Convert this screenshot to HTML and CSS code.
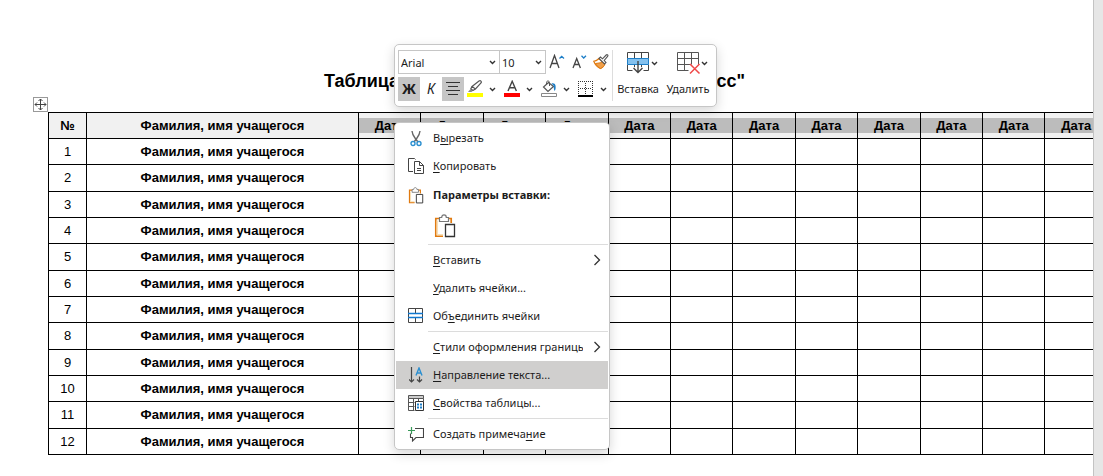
FILE: index.html
```html
<!DOCTYPE html>
<html lang="ru">
<head>
<meta charset="utf-8">
<title>Таблица</title>
<link rel="stylesheet" href="styles.css">
</head>
<body>
<main class="sheet">
  <h1 class="title"><span>Таблица</span><span>класс"</span></h1>
  <table class="grid" id="grid">
    <colgroup><col class="col-num"><col class="col-name"><col span="12"></colgroup>
    <thead><tr id="head"><th>№</th><th>Фамилия, имя учащегося</th></tr></thead>
    <tbody id="rows"></tbody>
  </table>
  <button class="move-handle" aria-label="Переместить таблицу">
    <svg width="13" height="13" viewBox="0 0 13 13" fill="none" stroke="#444"><path d="M6.500 1v11M1 6.500h11M4.500 3l2-2 2 2M4.500 10l2 2 2-2M3 4.500l-2 2 2 2M10 4.500l2 2-2 2"/></svg>
  </button>
</main>

<svg class="defs" width="0" height="0" aria-hidden="true">
  <symbol id="chev" viewBox="0 0 7 5"><path d="M1 1l2.500 2.500L6 1" fill="none" stroke="#333" stroke-width="1.400"/></symbol>
  <symbol id="arrow" viewBox="0 0 8 12"><path d="M1.500 1l5 5-5 5" fill="none" stroke="#333" stroke-width="1.300"/></symbol>
  <symbol id="paste" viewBox="0 0 22 24"><path d="M6 4.500H1.800v17.700H9M14 4.500h3.200V9" fill="none" stroke="#e07a10" stroke-width="1.700"/><path d="M3.300 6.500v14.200H9" fill="none" stroke="#f8dfb5" stroke-width="1.500"/><path d="M5.500 7.500v-4h2.200c0-3.500 4.600-3.500 4.600 0h2.200v4z" fill="#fff" stroke="#777" stroke-width="1.200"/><path d="M11.500 10.500h9v12h-9z" fill="#fff" stroke="#333" stroke-width="1.300"/></symbol>
</svg>

<div class="toolbar" role="toolbar" aria-label="Форматирование">
  <div class="tools">
    <div class="tool-row">
      <div class="combo combo-font"><select aria-label="Шрифт"><option>Arial</option></select><svg width="7" height="5"><use href="#chev"/></svg></div>
      <div class="combo combo-size"><select aria-label="Размер шрифта"><option>10</option></select><svg width="7" height="5"><use href="#chev"/></svg></div>
      <button class="tool" aria-label="Увеличить размер"><svg width="16" height="16" viewBox="0 0 16 16" fill="none"><path d="M1 14L5.500 1.500 10 14M2.800 9.500h5.600" stroke="#444" stroke-width="1.300"/><path d="M10.500 4.500l2.200-2.200L15 4.500" stroke="#1e7fc8" stroke-width="1.300"/></svg></button>
      <button class="tool" aria-label="Уменьшить размер"><svg width="16" height="16" viewBox="0 0 16 16" fill="none"><path d="M2 14L5.700 4.500 9.400 14M3.500 10.500h4.500" stroke="#444" stroke-width="1.300"/><path d="M10.500 1.800l2.200 2.200L15 1.800" stroke="#1e7fc8" stroke-width="1.300"/></svg></button>
      <button class="tool" aria-label="Формат по образцу"><svg width="16" height="16" viewBox="0 0 16 16"><path d="M6 4.500C4.500 6 2.500 7 .8 7.300 2 10.500 4 13 7.500 14.500c2-1 3.500-2.500 4-4.500z" fill="#fff" stroke="#e07a10" stroke-width="1.200"/><path d="M2.500 9.500l7-1L12 10c-.8 2-2.300 3.700-4.500 4.500C5.500 13.500 3.500 11.500 2.500 9.500z" fill="#f0a04b" stroke="#e07a10"/><path d="M6 4.500L7.500 3l2 1.800L13.200 1c1-1 2.300.3 1.400 1.400L11.200 6.500l1.800 2-1.500 1.500z" fill="#fff" stroke="#555" stroke-width="1.100"/></svg></button>
    </div>
    <div class="tool-row">
      <button class="tool on bold" aria-label="Полужирный">Ж</button>
      <button class="tool italic" aria-label="Курсив">К</button>
      <button class="tool on" aria-label="По центру"><svg width="14" height="14" viewBox="0 0 14 14" stroke="#333"><path d="M0 .5h14M2 4.500h10M0 8.500h14M2 12.500h10"/></svg></button>
      <button class="tool" aria-label="Цвет выделения"><svg width="16" height="18" viewBox="0 0 16 18"><path d="M0 13h16v4H0z" fill="#ff0"/><path d="M5 6.500L12 1c1.500-1 3 .5 2 2L8.500 9zM5 6.500L3.800 8.800l2 1.700L8.500 9" fill="#fff" stroke="#555" stroke-width="1.200"/><path d="M3.500 9L1 12h3.500l1.200-1.300z" fill="#888"/></svg></button>
      <button class="drop" aria-label="Варианты выделения"><svg width="7" height="5"><use href="#chev"/></svg></button>
      <button class="tool" aria-label="Цвет текста"><svg width="16" height="18" viewBox="0 0 16 18"><path d="M0 13h16v4H0z" fill="red"/><path d="M4 11L8.200 1.300 12.400 11M5.500 7.800h5.400" fill="none" stroke="#444" stroke-width="1.400"/></svg></button>
      <button class="drop" aria-label="Варианты цвета"><svg width="7" height="5"><use href="#chev"/></svg></button>
      <button class="tool" aria-label="Заливка"><svg width="16" height="18" viewBox="0 0 16 18"><path d="M.5 13.500h15v3H.5z" fill="#fff" stroke="#888"/><path d="M7.500 2.500L2.500 7l4.500 4.500L12.500 6.500z" fill="#fff" stroke="#555" stroke-width="1.200"/><path d="M5.500 4.500V2.500c0-2 3-2 3 0V6" fill="none" stroke="#555"/><path d="M10.500 3.500c2-.5 3.500 0 4 2 .3 2 .3 4-.8 5.500C12.500 9.500 13 6.500 12.500 5.500z" fill="#1e7fc8"/></svg></button>
      <button class="drop" aria-label="Варианты заливки"><svg width="7" height="5"><use href="#chev"/></svg></button>
      <button class="tool" aria-label="Границы"><svg width="16" height="16" viewBox="0 0 16 16" stroke="#333"><path d="M0 .5h15M.5 0v14M14.500 0v14M7.500 2v12M2 7.500h12" stroke-dasharray="1 1"/><path d="M0 15h15" stroke="#000" stroke-width="2"/></svg></button>
      <button class="drop" aria-label="Варианты границ"><svg width="7" height="5"><use href="#chev"/></svg></button>
    </div>
  </div>
  <button class="big"><span class="big-icon">
    <svg width="22" height="22" viewBox="0 0 22 22" fill="none" stroke="#444"><path d="M.5.500h21v6H.5zM7.500.500v6M14.500.500v6M.5 12.500v6h5M21.500 12.500v6h-5M7.500 12.500v3M14.500 12.500v3"/><path d="M.5 6.500h21v6H.5z" fill="#84c1ee" stroke="#1e7fc8"/><path d="M11 13v8M6.500 16L11 20.500l4.500-4.500" stroke="#fff" stroke-width="3"/><path d="M11 9v12M6.500 16L11 20.500l4.500-4.500" stroke-width="1.400"/></svg>
    <svg class="big-chev" width="7" height="5"><use href="#chev"/></svg></span>Вставка</button>
  <button class="big"><span class="big-icon">
    <svg width="22" height="22" viewBox="0 0 22 22" fill="none" stroke="#555"><path d="M.5.500h21v12M.5.500v18h11M7.500.500v18M14.500.500v12M.5 6.500h21M.5 12.500h13"/><path d="M13 12l9.500 9.500M22.500 12L13 21.500" stroke="#f04848" stroke-width="1.500"/></svg>
    <svg class="big-chev" width="7" height="5"><use href="#chev"/></svg></span>Удалить</button>
</div>

<div class="menu" role="menu">
  <button class="item" role="menuitem"><svg width="12" height="17" viewBox="0 0 12 17" fill="none"><path d="M2 1c.3 3 1 4.500 3 7l3 4M10 1c-.3 3-1 4.500-3 7l-3 4" stroke="#666" stroke-width="1.400"/><circle cx="3" cy="13.500" r="2" stroke="#2b8fd0" stroke-width="1.400"/><circle cx="9" cy="13.500" r="2" stroke="#2b8fd0" stroke-width="1.400"/></svg><span class="label">В<u>ы</u>резать</span></button>
  <button class="item" role="menuitem"><svg width="16" height="16" viewBox="0 0 16 16" fill="#fff" stroke="#444"><path d="M5 13.500H.5V.500h6l1 1"/><path d="M6.500 3.500h5l4 4v8h-9z"/><path d="M11.500 3.500v4h4M9 10.500h4M9 12.500h4" fill="none"/></svg><span class="label"><u>К</u>опировать</span></button>
  <div class="item heading"><svg width="16" height="17"><use href="#paste"/></svg><span class="label">Параметры вставки:</span></div>
  <div class="paste-row"><button class="paste" aria-label="Сохранить исходное форматирование"><svg width="22" height="24"><use href="#paste"/></svg></button></div>
  <hr>
  <button class="item" role="menuitem"><i></i><span class="label"><u>В</u>ставить</span><svg width="8" height="12"><use href="#arrow"/></svg></button>
  <button class="item" role="menuitem"><i></i><span class="label"><u>У</u>далить ячейки...</span></button>
  <button class="item" role="menuitem"><svg width="16" height="16" viewBox="0 0 16 16" fill="none"><path d="M.5.500h14v14H.5zM7.500.500v5M7.500 10v5" stroke="#444"/><path d="M0 5.500h15M0 9.500h15" stroke="#0f78d0" stroke-width="1.400"/></svg><span class="label">Об<u>ъ</u>единить ячейки</span></button>
  <hr>
  <button class="item" role="menuitem"><i></i><span class="label"><u>С</u>тили оформления границы</span><svg width="8" height="12"><use href="#arrow"/></svg></button>
  <button class="item active" role="menuitem"><svg width="14" height="17" viewBox="0 0 14 17" fill="none"><path d="M2.500 0v15M0 12.500L2.500 15 5 12.500M10.500 9.500V15M8 12.500l2.500 2.500 2.500-2.500" stroke="#444" stroke-width="1.200"/><path d="M7 8.500L10 1l3 7.500M8 6h4" stroke="#2b8fd0" stroke-width="1.400"/></svg><span class="label"><u>Н</u>аправление текста...</span></button>
  <button class="item" role="menuitem"><svg width="16" height="16" viewBox="0 0 16 16" fill="none" stroke="#555"><path d="M.5.500h15v3H.5z" fill="#ccc"/><path d="M.5 3.500v12h6M.5 7.500h6M.5 11.500h6M5.500 3.500v12M10.500 3.500v3M15.500 3.500v3"/><path d="M7.500 6.500h8v9h-8z" fill="#fff" stroke="#333"/><path d="M9 9.500h2M12 9.500h2M9 12.500h2M12 12.500h2" stroke="#1e7fc8" stroke-width="2"/></svg><span class="label"><u>С</u>войства таблицы...</span></button>
  <hr>
  <button class="item" role="menuitem"><svg width="16" height="15" viewBox="0 0 16 15" fill="none"><path d="M7 1.500h8.500v9H8L4.500 14v-3.500h-2v-4" stroke="#444" stroke-width="1.100"/><path d="M3.500 0v7M0 3.500h7" stroke="#3a9a5a" stroke-width="1.200"/></svg><span class="label">Создать примеча<u>н</u>ие</span></button>
</div>
<script src="grid.js"></script>
</body>
</html>
```
FILE: styles.css
```css
* { box-sizing: border-box; }
body {
  margin: 0;
  min-height: 100vh;
  display: flex;
  background: #e6e6e6;
  color: #000;
  font-family: "Liberation Sans", Arial, sans-serif;
}
.sheet {
  position: relative;
  flex: 1;
  min-width: 0;
  margin-right: 9px;
  padding: 68px 0 20px 48px;
  background: #fff;
  border-right: 1px solid #c3c3c3;
  overflow: hidden;
}
.title {
  display: flex;
  justify-content: space-between;
  width: 421px;
  margin: 0 0 18px 276px;
  font-size: 18px;
  line-height: 26px;
}
.grid {
  width: calc(100% + 15px);
  height: 343px;
  table-layout: fixed;
  border-collapse: collapse;
  font-size: 13px;
  line-height: 15px;
  text-align: center;
}
.grid th, .grid td { height: 26px; padding: 0; border: 1px solid #000; }
.grid thead th { background: #f1f1f1; }
.col-num { width: 38px; }
.col-name { width: 272px; }
.picked { display: block; background: #bcbcbc; }
.move-handle {
  position: absolute;
  left: 33px;
  top: 97px;
  display: grid;
  place-items: center;
  width: 15px;
  height: 15px;
  padding: 0;
  border: 1px solid #999;
  background: #fff;
}
.defs { position: absolute; }
button, select { font: inherit; color: inherit; }
.toolbar, .menu {
  position: absolute;
  left: 394px;
  background: #fff;
  border: 1px solid #c6c6c6;
  border-radius: 5px;
  box-shadow: 0 4px 12px rgba(0, 0, 0, .16);
  color: #1c1c1c;
  font-family: "Noto Sans", "Open Sans", sans-serif;
  font-size: 11px;
}
.toolbar {
  top: 44px;
  display: flex;
  padding: 5px 3px;
}
.tools { display: grid; gap: 3px; }
.tool-row { display: flex; height: 24px; }
.combo {
  display: grid;
  grid-template-columns: 1fr 14px;
  align-items: center;
  border: 1px solid #c6c6c6;
}
.combo-font { width: 102px; }
.combo-size { width: 46px; border-left: 0; }
.combo select {
  grid-area: 1 / 1 / 2 / 3;
  height: 22px;
  padding: 0 2px;
  border: 0;
  background: none;
  appearance: none;
}
.combo svg { grid-area: 1 / 2; pointer-events: none; margin-left: 4px; }
.tool, .drop {
  display: grid;
  place-items: center;
  width: 22px;
  padding: 0;
  border: 0;
  background: none;
  line-height: 18px;
}
.drop { width: 13px; margin-right: 2px; }
.on { background: #c6c6c6; }
.bold { font-size: 14px; font-weight: 700; }
.italic { font-size: 14px; font-style: italic; }
.big {
  display: grid;
  align-content: space-between;
  justify-items: center;
  width: 50px;
  padding: 2px 0 3px;
  border: 0;
  background: none;
  line-height: 18px;
}
.tools + .big { width: 51px; border-left: 1px solid #ddd; }
.big-icon {
  display: grid;
  grid-template-columns: 1fr 22px 1fr;
  align-items: center;
  width: 100%;
}
.big-icon svg { grid-row: 1; grid-column: 2; overflow: visible; }
.big-icon .big-chev { grid-column: 3; margin-left: 2px; }
.menu {
  top: 122px;
  width: 216px;
  padding: 1px;
}
.item {
  display: grid;
  grid-template-columns: 37px 150px 1fr;
  align-items: center;
  width: 100%;
  height: 28px;
  padding: 0;
  border: 0;
  background: none;
  text-align: left;
}
.item > :first-child { justify-self: center; margin-left: 3px; }
.item > .label { overflow: hidden; white-space: nowrap; line-height: 18px; }
.item > .label + svg { margin-left: 10px; }
.item u { text-underline-offset: 2px; }
.heading { height: 30px; font-weight: 700; }
.active { background: #d0cfce; }
.paste-row { height: 33px; padding: 4px 0 0 38px; }
.paste { display: block; padding: 0; border: 0; background: none; }
hr {
  height: 1px;
  margin: 1px 0 1px 32px;
  border: 0;
  background: #dcdcdc;
}
```
FILE: grid.js
```js
const head = document.getElementById('head');
const rows = document.getElementById('rows');
const dates = 12;
for (let i = 0; i < dates; i++) {
  head.insertAdjacentHTML('beforeend', '<th><span class="picked">Дата</span></th>');
}
for (let n = 1; n <= 12; n++) {
  rows.insertAdjacentHTML('beforeend',
    `<tr><td>${n}</td><th scope="row">Фамилия, имя учащегося</th>${'<td></td>'.repeat(dates)}</tr>`);
}
```
